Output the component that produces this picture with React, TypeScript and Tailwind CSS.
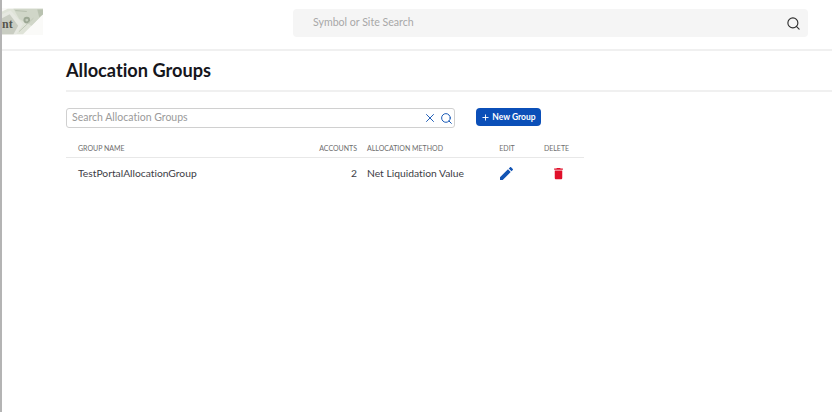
import { Search, X, Plus } from "lucide-react";

const font = { fontFamily: "Lato, 'Liberation Sans', sans-serif" };

/** Cropped banknote logo in the top left corner */
function Logo() {
  return (
    <div className="relative h-[27px] w-[41px] overflow-hidden bg-[#fafaf8]">
      <svg width="41" height="27" viewBox="0 0 43 27">
        <polygon points="6,0 43,0 43,6 22,27 0,27 0,3" fill="#dfe3d8" />
        <polygon points="12,0 43,0 43,6 31,18 18,11" fill="#d0d6c8" />
        <polygon points="0,6 9,2 22,16 15,27 0,27" fill="#e6e8e1" />
        <polygon points="0,10 8,6 17,18 12,27 0,27" fill="#c9cdc2" />
        <circle cx="26" cy="12" r="3.5" fill="#9ca794" />
        <circle cx="26" cy="12" r="1.5" fill="#c4ccbc" />
        <polygon points="37,1 43,1 43,6 39,9" fill="#b9c2b0" />
        <line x1="14" y1="2" x2="26" y2="3" stroke="#b5bdac" strokeWidth="1" />
        <line x1="18" y1="24" x2="33" y2="10" stroke="#c0c7b7" strokeWidth="1" />
      </svg>
      <span className="absolute left-0 top-[9px] font-['Liberation_Serif'] text-[12px] font-bold leading-[14px] text-[#55554f]">
        nt
      </span>
    </div>
  );
}

function Header() {
  return (
    <header className="flex h-[51px] shrink-0 border-b-2 border-[#f0f0f0]">
      <div className="w-[291px] shrink-0 pt-2">
        <Logo />
      </div>
      <div className="mt-[9px] flex h-[28px] w-[515px] items-center justify-between rounded-sm bg-[#f5f5f5] pl-5 pr-[7px]">
        <span className="text-[10.6px] text-[#a8a8a8]">Symbol or Site Search</span>
        <Search className="h-[15px] w-[15px] text-[#2f2f2f]" strokeWidth={1.8} />
      </div>
    </header>
  );
}

function Toolbar() {
  return (
    <div className="flex items-start">
      <div className="flex h-5 w-[389px] items-center justify-between rounded-[3px] border border-[#d0d0d0] pl-[5px] pr-[1px]">
        <span className="text-[10.5px] text-[#9a9a9a]">Search Allocation Groups</span>
        <div className="flex items-center gap-[3px] text-[#1254b4]">
          <X className="h-[14px] w-[14px]" strokeWidth={1.6} />
          <Search className="h-[13px] w-[13px]" strokeWidth={1.8} />
        </div>
      </div>
      <button className="ml-[21px] flex h-[18px] w-[65px] items-center justify-center gap-[2px] rounded-sm bg-[#0b4fb8] text-[8.5px] font-bold text-white">
        <Plus className="h-[9px] w-[9px]" strokeWidth={2.5} />
        New Group
      </button>
    </div>
  );
}

function GroupsTable() {
  const head = "text-[7px] uppercase text-[#6e6e6e]";
  return (
    <div className="mt-3 w-[518px]">
      <div className="flex h-[18px] items-center border-b border-[#e8e8e8]">
        <div className={`w-[218px] pl-3 ${head}`}>Group Name</div>
        <div className={`w-[73px] text-right ${head}`}>Accounts</div>
        <div className={`w-[133px] pl-[10px] ${head}`}>Allocation Method</div>
        <div className={`w-[34px] text-center ${head}`}>Edit</div>
        <div className={`w-[60px] pl-[5px] text-center ${head}`}>Delete</div>
      </div>
      <div className="flex h-[31px] items-center text-[10.3px] text-[#3d3d46]">
        <div className="w-[218px] pl-3">TestPortalAllocationGroup</div>
        <div className="w-[73px] text-right">2</div>
        <div className="w-[133px] pl-[10px]">Net Liquidation Value</div>
        <div className="flex w-[34px] justify-center pr-[2px]">
          <svg width="13" height="13" viewBox="3 3 18 18" fill="#1254b4">
            <path d="M3 17.25V21h3.75L17.81 9.94l-3.75-3.75L3 17.25zM20.71 7.04a1 1 0 0 0 0-1.41l-2.34-2.34a1 1 0 0 0-1.41 0l-1.83 1.83 3.75 3.75 1.83-1.83z" />
          </svg>
        </div>
        <div className="flex w-[60px] justify-center pl-[8px]">
          <svg width="15" height="15" viewBox="0 0 24 24" fill="#e0102a">
            <path d="M6 19c0 1.1.9 2 2 2h8c1.1 0 2-.9 2-2V7H6v12zM19 4h-3.5l-1-1h-5l-1 1H5v2h14V4z" />
          </svg>
        </div>
      </div>
    </div>
  );
}

export default function App() {
  return (
    <div
      className="flex h-[412px] w-[832px] flex-col overflow-hidden border-l-2 border-[#b4b4b4] bg-white [font-variant-ligatures:none]"
      style={font}
    >
      <Header />
      <main className="pl-[64px]">
        <div className="h-[41px] border-b-2 border-[#f0f0f0]">
          <h1 className="pt-[7px] text-[18.2px] font-bold leading-[24px] text-[#16161c]">Allocation Groups</h1>
        </div>
        <div className="pt-[16px]">
          <Toolbar />
          <GroupsTable />
        </div>
      </main>
    </div>
  );
}
